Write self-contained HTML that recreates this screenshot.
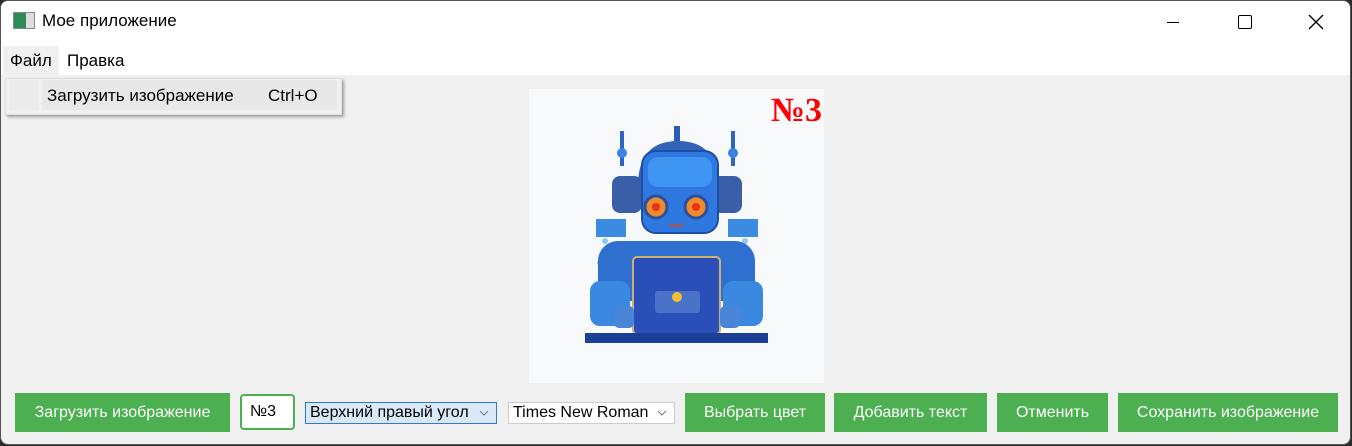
<!DOCTYPE html>
<html><head><meta charset="utf-8"><style>
*{margin:0;padding:0;box-sizing:border-box}
body{width:1352px;height:446px;overflow:hidden;background:#2b2b2b;font-family:"Segoe UI","Liberation Sans","Noto Sans CJK JP",sans-serif}
.win{position:absolute;left:0;top:0;width:1351px;height:445px;background:#f0f0f0;border:1px solid #555;border-radius:8px;overflow:hidden}
.in{position:absolute;left:-1px;top:0;width:1352px;height:446px}
.title{position:absolute;left:0;top:-1px;width:100%;height:46px;background:#fff}
.menu{position:absolute;left:0;top:45px;width:100%;height:29px;background:#fff;font-size:17px}
.abs{position:absolute}
.btn{position:absolute;top:392px;height:39px;background:#4caf50;color:#fff;font-size:16px;display:flex;align-items:center;justify-content:center}
.combo{position:absolute;top:401px;height:22px;border:1px solid #ccc;background:#fff;font-size:16px;padding-left:4px;line-height:20px;color:#000}
.chev{position:absolute;right:7px;top:7px}
</style></head><body><div class="win"><div class="in">
<div class="title">
 <div class="abs" style="left:13px;top:12px;width:22px;height:17px;border:1px solid #888;background:linear-gradient(90deg,#2e8b57 0 60%,#ddd 60%)"></div>
 <div class="abs" style="left:42px;top:11px;font-size:17px;color:#000">Мое приложение</div>
 <div class="abs" style="left:1167px;top:22px;width:12px;height:1px;background:#000"></div>
 <div class="abs" style="left:1238px;top:15px;width:14px;height:14px;border:1.5px solid #000;border-radius:2px"></div>
 <svg class="abs" style="left:1308px;top:14px" width="16" height="16"><path d="M1 1L15 15M15 1L1 15" stroke="#000" stroke-width="1.4"/></svg>
</div>
<div class="menu">
 <div class="abs" style="left:3px;top:0;width:56px;height:29px;background:#f0f0f0"></div>
 <div class="abs" style="left:10px;top:5px">Файл</div>
 <div class="abs" style="left:67px;top:5px">Правка</div>
</div>
<div class="abs" style="left:5px;top:77px;width:337px;height:37px;background:#f0f0f0;box-shadow:2px 2px 3px rgba(0,0,0,.35);border:1px solid #ddd"></div>
<div class="abs" style="left:9px;top:79px;width:30px;height:30px;background:#ebebeb"></div>
<div class="abs" style="left:42px;top:79px;width:295px;height:30px;background:#e8e8e8"></div>
<div class="abs" style="left:47px;top:85px;font-size:17px">Загрузить изображение</div>
<div class="abs" style="left:268px;top:85px;font-size:17px">Ctrl+O</div>

<div class="abs" style="left:529px;top:88px;width:295px;height:294px;background:#f8f9fb;overflow:hidden">
<svg width="295" height="294" viewBox="529 88 295 294">
 <g fill="#8ec9f0"><circle cx="605" cy="240" r="3"/><circle cx="612" cy="252" r="4"/><circle cx="600" cy="262" r="3"/><circle cx="745" cy="240" r="3"/><circle cx="740" cy="252" r="4"/><circle cx="752" cy="262" r="3"/><circle cx="608" cy="275" r="3"/><circle cx="748" cy="275" r="3"/></g>
 <rect x="596" y="218" width="30" height="18" fill="#3b8ce0"/><rect x="728" y="218" width="30" height="18" fill="#3b8ce0"/>
 <rect x="620" y="130" width="4" height="35" fill="#2c64c2"/><circle cx="622" cy="152" r="5" fill="#3c82e0"/>
 <rect x="731" y="130" width="4" height="35" fill="#2c64c2"/><circle cx="733" cy="152" r="5" fill="#3c82e0"/>
 <rect x="674" y="125" width="6" height="20" fill="#2a5cb8"/>
 <rect x="598" y="240" width="157" height="60" rx="20" fill="#2f6fd0"/>
 <rect x="590" y="280" width="40" height="45" rx="10" fill="#3a88e0"/><rect x="723" y="280" width="40" height="45" rx="10" fill="#3a88e0"/>
 <path d="M638 185 q0-45 40-45 q40 0 40 45" fill="#3363b8"/>
 <rect x="612" y="175" width="30" height="37" rx="8" fill="#3a5fa8"/><rect x="712" y="175" width="30" height="37" rx="8" fill="#3a5fa8"/>
 <rect x="642" y="150" width="76" height="82" rx="14" fill="#2f78e0" stroke="#1e4fa8" stroke-width="2"/>
 <rect x="648" y="156" width="64" height="30" rx="10" fill="#3f95f2"/>
 <circle cx="656" cy="206" r="11" fill="#f08a2a" stroke="#2a4f9c" stroke-width="3"/><circle cx="656" cy="206" r="4" fill="#e8301a"/>
 <circle cx="696" cy="206" r="11" fill="#f08a2a" stroke="#2a4f9c" stroke-width="3"/><circle cx="696" cy="206" r="4" fill="#e8301a"/>
 <path d="M669 223 q7 4 14 0" stroke="#c05030" stroke-width="2" fill="none"/>
 <rect x="633" y="256" width="87" height="77" rx="4" fill="#2a4fb8" stroke="#cfb070" stroke-width="2"/>
 <rect x="655" y="290" width="45" height="22" rx="3" fill="#4a72c8"/><circle cx="677" cy="296" r="5" fill="#f0c030"/>
 <rect x="614" y="305" width="20" height="22" rx="5" fill="#4a86d8"/><rect x="720" y="305" width="20" height="22" rx="5" fill="#4a86d8"/>
 <rect x="585" y="332" width="183" height="10" fill="#1c3f98"/>
</svg>
<div class="abs" style="right:2px;top:0;font-family:'Liberation Serif',serif;font-size:34px;font-weight:bold;color:#f00;line-height:44px">№3</div>
</div>

<div class="btn" style="left:15px;width:215px">Загрузить изображение</div>
<div class="abs" style="left:240px;top:393px;width:55px;height:36px;border:2px solid #4caf50;border-radius:4px;background:#fff;font-size:16px;padding:7px 0 0 8px">№3</div>
<div class="combo" style="left:305px;width:192px;background:#d9e9f7;border-color:#2a7ad6">Верхний правый угол<svg class="chev" width="10" height="6"><path d="M1 1L5 5L9 1" stroke="#777" fill="none"/></svg></div>
<div class="combo" style="left:508px;width:167px">Times New Roman<svg class="chev" width="10" height="6"><path d="M1 1L5 5L9 1" stroke="#777" fill="none"/></svg></div>
<div class="btn" style="left:685px;width:140px">Выбрать цвет</div>
<div class="btn" style="left:834px;width:153px">Добавить текст</div>
<div class="btn" style="left:997px;width:111px">Отменить</div>
<div class="btn" style="left:1118px;width:220px">Сохранить изображение</div>
</div></div></body></html>
